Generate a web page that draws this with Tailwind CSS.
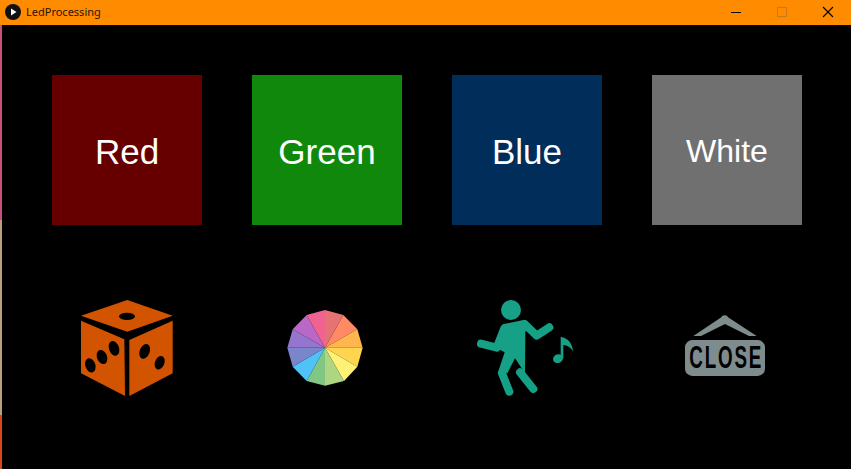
<!DOCTYPE html>
<html lang="en">
<head>
  <meta charset="UTF-8" />
  <title>LedProcessing</title>
  <script src="https://cdn.jsdelivr.net/npm/@tailwindcss/browser@4"></script>
</head>
<body class="bg-black w-[851px] h-[469px] overflow-hidden relative font-['Liberation_Sans',sans-serif]">

  <!-- title bar -->
  <div class="h-[25px] bg-[#ff8c00] flex items-center pl-[5px]">
    <svg class="w-4 h-4 shrink-0 -mt-[1px]" viewBox="0 0 16 16">
      <circle cx="8" cy="8" r="8" fill="#111" />
      <path d="M6 4.5 L11.5 8 L6 11.5 Z" fill="#fff" />
    </svg>
    <span class="ml-[5px] text-[11px] text-[#2a1500] font-['Noto_Sans',sans-serif]">LedProcessing</span>
    <div class="ml-auto flex items-center">
      <svg class="w-[46px] h-[25px]" viewBox="0 0 46 25"><path d="M18 12.5 H28" stroke="#000" stroke-width="1" /></svg>
      <svg class="w-[46px] h-[25px]" viewBox="0 0 46 25"><rect x="18.5" y="7.5" width="9" height="9" fill="none" stroke="#c97a1a" stroke-width="1" /></svg>
      <svg class="w-[46px] h-[25px]" viewBox="0 0 46 25"><path d="M18 7 L28 17 M28 7 L18 17" stroke="#000" stroke-width="1.1" /></svg>
    </div>
  </div>

  <!-- window edge -->
  <div class="absolute left-0 top-[25px] bottom-0 w-[2px] flex flex-col">
    <div class="h-[195px] bg-[#c8507e]"></div>
    <div class="h-[195px] bg-[#b8a078]"></div>
    <div class="flex-1 bg-[#d9481c]"></div>
  </div>

  <!-- buttons -->
  <div class="grid grid-cols-[repeat(4,150px)] gap-x-[50px] gap-y-[50px] pl-[52px] pt-[50px]">
    <div class="h-[150px] bg-[#660000] flex items-center justify-center text-white text-[35px] pt-[4px]">Red</div>
    <div class="h-[150px] bg-[#10880c] flex items-center justify-center text-white text-[35px] pt-[4px]">Green</div>
    <div class="h-[150px] bg-[#002d5a] flex items-center justify-center text-white text-[35px] pt-[4px]">Blue</div>
    <div class="h-[150px] bg-[#707070] flex items-center justify-center text-white text-[32px] pt-[2px]">White</div>

    <!-- dice -->
    <svg class="w-[150px] h-[150px]" viewBox="-54 -45 450 450">
      <path d="M172 30 L308 77 L172 125 L33 77 Z M33 92 L163 148 L165 318 L33 250 Z M178 150 L308 92 L308 250 L178 318 Z" fill="#d35400" />
      <ellipse cx="171" cy="79" rx="24" ry="11" fill="#000" />
      <ellipse cx="132" cy="175" rx="15" ry="23" transform="rotate(-20 132 175)" fill="#000" />
      <ellipse cx="96" cy="201" rx="15" ry="22" transform="rotate(-20 96 201)" fill="#000" />
      <ellipse cx="61" cy="226" rx="15" ry="22" transform="rotate(-20 61 226)" fill="#000" />
      <ellipse cx="224" cy="184" rx="15" ry="23" transform="rotate(22 224 184)" fill="#000" />
      <ellipse cx="269" cy="218" rx="14" ry="21" transform="rotate(22 269 218)" fill="#000" />
    </svg>

    <!-- colour wheel -->
    <svg class="w-[150px] h-[150px]" viewBox="-84 -75 450 450">
      <polygon points="135,143 135,30 190,45" fill="#e57373" />
      <polygon points="135,143 190,45 232,88" fill="#ff8a65" />
      <polygon points="135,143 232,88 248,143" fill="#ffb74d" />
      <polygon points="135,143 248,143 232,200" fill="#ffd54f" />
      <polygon points="135,143 232,200 192,243" fill="#fff176" />
      <polygon points="135,143 192,243 135,257" fill="#aed581" />
      <polygon points="135,143 135,257 80,243" fill="#81c784" />
      <polygon points="135,143 80,243 38,200" fill="#4fc3f7" />
      <polygon points="135,143 38,200 22,143" fill="#7986cb" />
      <polygon points="135,143 22,143 38,88" fill="#9575cd" />
      <polygon points="135,143 38,88 80,45" fill="#ba68c8" />
      <polygon points="135,143 80,45 135,30" fill="#f06292" />
    </svg>

    <!-- dancer -->
    <svg class="w-[150px] h-[150px]" viewBox="-54 -60 450 450" fill="#16a085">
      <circle cx="123" cy="45" r="30" />
      <path d="M98 88 L160 75 Q170 74 176 84 L166 112 L165 235 L135 190 L112 235 L84 232 L104 172 L80 160 Z" />
      <path d="M165 88 L200 122 L238 97 M103 100 L80 158 L33 146 M96 235 L118 290 M150 232 L190 282" fill="none" stroke="#16a085" stroke-width="24" stroke-linecap="round" stroke-linejoin="round" />
      <ellipse cx="264" cy="191" rx="15" ry="13" transform="rotate(-20 264 191)" />
      <path d="M272 190 L272 126 Q305 130 309 170 Q298 150 280 150 L280 190 Z" />
    </svg>

    <!-- close sign -->
    <svg class="w-[150px] h-[150px]" viewBox="-69 -105 450 450">
      <circle cx="149" cy="26" r="10" fill="#7f8c8d" />
      <path d="M55 78 L140 21 Q149 15 158 21 L245 78 L222 78 L150 42 L78 78 Z" fill="#7f8c8d" />
      <rect x="30" y="90" width="240" height="108" rx="22" fill="#7f8c8d" />
      <text transform="translate(43 175) scale(.6 1)" font-family="Liberation Sans" font-weight="700" font-size="94" letter-spacing="9" fill="#000">CLOSE</text>
    </svg>
  </div>
</body>
</html>
